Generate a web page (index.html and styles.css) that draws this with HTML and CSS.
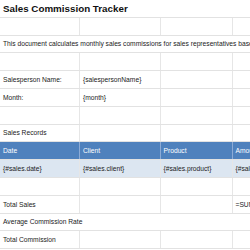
FILE: index.html
```html
<!DOCTYPE html>
<html>
<head>
<meta charset="utf-8">
<link rel="stylesheet" href="styles.css">
</head>
<body>
<div class="sheet">
  <div class="row span title"><div class="cell">Sales Commission Tracker</div></div>
  <div class="row"><div class="cell"></div><div class="cell"></div><div class="cell"></div><div class="cell"></div></div>
  <div class="row span"><div class="cell">This document calculates monthly sales commissions for sales representatives based on their sales records.</div></div>
  <div class="row"><div class="cell"></div><div class="cell"></div><div class="cell"></div><div class="cell"></div></div>
  <div class="row"><div class="cell">Salesperson Name:</div><div class="cell">{salespersonName}</div><div class="cell"></div><div class="cell"></div></div>
  <div class="row"><div class="cell">Month:</div><div class="cell">{month}</div><div class="cell"></div><div class="cell"></div></div>
  <div class="row"><div class="cell"></div><div class="cell"></div><div class="cell"></div><div class="cell"></div></div>
  <div class="row"><div class="cell">Sales Records</div><div class="cell"></div><div class="cell"></div><div class="cell"></div></div>
  <div class="row head"><div class="cell">Date</div><div class="cell">Client</div><div class="cell">Product</div><div class="cell">Amount</div></div>
  <div class="row data"><div class="cell">{#sales.date}</div><div class="cell">{#sales.client}</div><div class="cell">{#sales.product}</div><div class="cell">{#sales.amount}</div></div>
  <div class="row"><div class="cell"></div><div class="cell"></div><div class="cell"></div><div class="cell"></div></div>
  <div class="row"><div class="cell">Total Sales</div><div class="cell"></div><div class="cell"></div><div class="cell">=SUM(D10:D10)</div></div>
  <div class="row span"><div class="cell">Average Commission Rate</div></div>
  <div class="row"><div class="cell">Total Commission</div><div class="cell"></div><div class="cell"></div><div class="cell"></div></div>
</div>
</body>
</html>
```
FILE: styles.css
```css
html, body {
  margin: 0;
  padding: 0;
  background: #ffffff;
  overflow: hidden;
}
.sheet {
  width: 340px;
  font-family: "Liberation Sans", Arial, sans-serif;
  font-size: 6.7px;
  color: #222222;
}
.row {
  display: grid;
  grid-template-columns: 80px 80.5px 72px 1fr;
  height: 16.8px;
  border-bottom: 1px solid #e2e2e2;
}
.row.span {
  grid-template-columns: 1fr;
}
.cell {
  display: flex;
  align-items: center;
  padding-left: 3px;
  white-space: nowrap;
  overflow: hidden;
  border-right: 1.5px solid #e6e6e6;
}
.row.span .cell {
  border-right: none;
}
.title .cell {
  font-size: 9.8px;
  font-weight: bold;
  color: #111111;
}
.head {
  background: #4f81bd;
  color: #ffffff;
}
.head .cell {
  border-right-color: #8dabd6;
}
.data {
  background: #dce6f1;
}
```
